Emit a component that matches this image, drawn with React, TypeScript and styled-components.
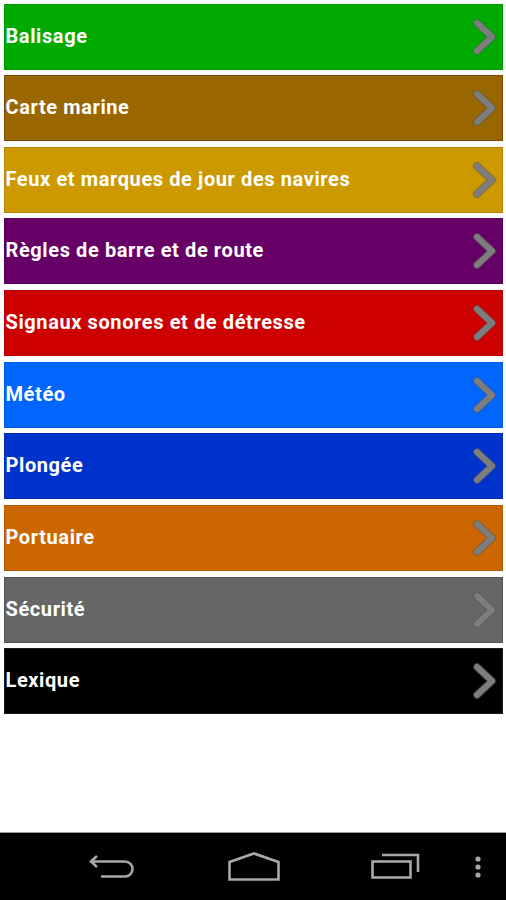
import React, { FC } from 'react';
import styled, { createGlobalStyle } from 'styled-components';

const GlobalStyle = createGlobalStyle`
  html, body {
    margin: 0;
    padding: 0;
    background: #ffffff;
  }
  body {
    font-family: Roboto, "Liberation Sans", sans-serif;
  }
`;

const Screen = styled.div`
  width: 506px;
  height: 900px;
  display: flex;
  flex-direction: column;
  background: #ffffff;
  overflow: hidden;
`;

const Menu = styled.div`
  flex: 1;
  display: flex;
  flex-direction: column;
  gap: 5.67px;
  padding: 3.5px 3px 0 3.5px;
`;

const Row = styled.div<{ $bg: string; $edge: string }>`
  height: 66px;
  box-sizing: border-box;
  display: flex;
  align-items: center;
  justify-content: space-between;
  background: ${props => props.$bg};
  border: 1px solid ${props => props.$edge};
  padding: 0 4px 0 1px;
  cursor: pointer;
`;

const Label = styled.span`
  color: #ffffff;
  font-size: 20px;
  font-weight: 700;
  letter-spacing: 0.6px;
  margin-top: -2px;
`;

const NavBar = styled.div`
  height: 67px;
  background: #000000;
  border-top: 1px solid #9a9a9a;
  display: grid;
  grid-template-columns: 60px 106px 176px 108px 56px;
  align-items: center;
`;

const NavSlot = styled.div`
  display: flex;
  justify-content: center;
  align-items: center;
`;

const Chevron: FC = () => (
  <svg width="26" height="36" viewBox="0 0 26 36">
    <path
      d="M5 4 L20 18 L5 32"
      fill="none"
      stroke="#555"
      strokeWidth="8"
      strokeLinecap="round"
      strokeLinejoin="round"
      opacity="0.55"
    />
    <path
      d="M5 4 L20 18 L5 32"
      fill="none"
      stroke="#7d7d7d"
      strokeWidth="6"
      strokeLinecap="round"
      strokeLinejoin="round"
    />
  </svg>
);

const BackIcon: FC = () => (
  <svg width="48" height="26" viewBox="0 0 48 26">
    <path
      d="M8 2 L2 7.5 L8 13 M2 7.5 H36 A7.5 7.5 0 0 1 36 22.5 H12"
      fill="none"
      stroke="#a8a8a8"
      strokeWidth="2.6"
    />
  </svg>
);

const HomeIcon: FC = () => (
  <svg width="54" height="30" viewBox="0 0 54 30">
    <path
      d="M2.5 10 L27 1.5 L51.5 10 V27.5 H2.5 Z"
      fill="none"
      stroke="#a8a8a8"
      strokeWidth="2.6"
    />
  </svg>
);

const RecentIcon: FC = () => (
  <svg width="50" height="28" viewBox="0 0 50 28">
    <rect x="1.5" y="8.5" width="38" height="16" fill="none" stroke="#a8a8a8" strokeWidth="2.6" />
    <path d="M11 2 H47 V19" fill="none" stroke="#a8a8a8" strokeWidth="2.6" />
  </svg>
);

const MenuDots: FC = () => (
  <svg width="8" height="24" viewBox="0 0 8 24">
    <circle cx="4" cy="4" r="2.6" fill="#a8a8a8" />
    <circle cx="4" cy="12" r="2.6" fill="#a8a8a8" />
    <circle cx="4" cy="20" r="2.6" fill="#a8a8a8" />
  </svg>
);

const items = [
  { label: 'Balisage', bg: '#00aa00', edge: '#009a00' },
  { label: 'Carte marine', bg: '#996600', edge: '#7a4a00' },
  { label: 'Feux et marques de jour des navires', bg: '#cc9900', edge: '#b88400' },
  { label: 'Règles de barre et de route', bg: '#660066', edge: '#550055' },
  { label: 'Signaux sonores et de détresse', bg: '#cc0000', edge: '#b80000' },
  { label: 'Météo', bg: '#0066ff', edge: '#005ae8' },
  { label: 'Plongée', bg: '#0033cc', edge: '#002bb3' },
  { label: 'Portuaire', bg: '#cc6600', edge: '#b85a00' },
  { label: 'Sécurité', bg: '#666666', edge: '#555555' },
  { label: 'Lexique', bg: '#000000', edge: '#1a1a1a' },
];

export default function App() {
  return (
    <Screen>
      <GlobalStyle />
      <Menu>
        {items.map(item => (
          <Row key={item.label} $bg={item.bg} $edge={item.edge}>
            <Label>{item.label}</Label>
            <Chevron />
          </Row>
        ))}
      </Menu>
      <NavBar>
        <div />
        <NavSlot><BackIcon /></NavSlot>
        <NavSlot><HomeIcon /></NavSlot>
        <NavSlot><RecentIcon /></NavSlot>
        <NavSlot><MenuDots /></NavSlot>
      </NavBar>
    </Screen>
  );
}
